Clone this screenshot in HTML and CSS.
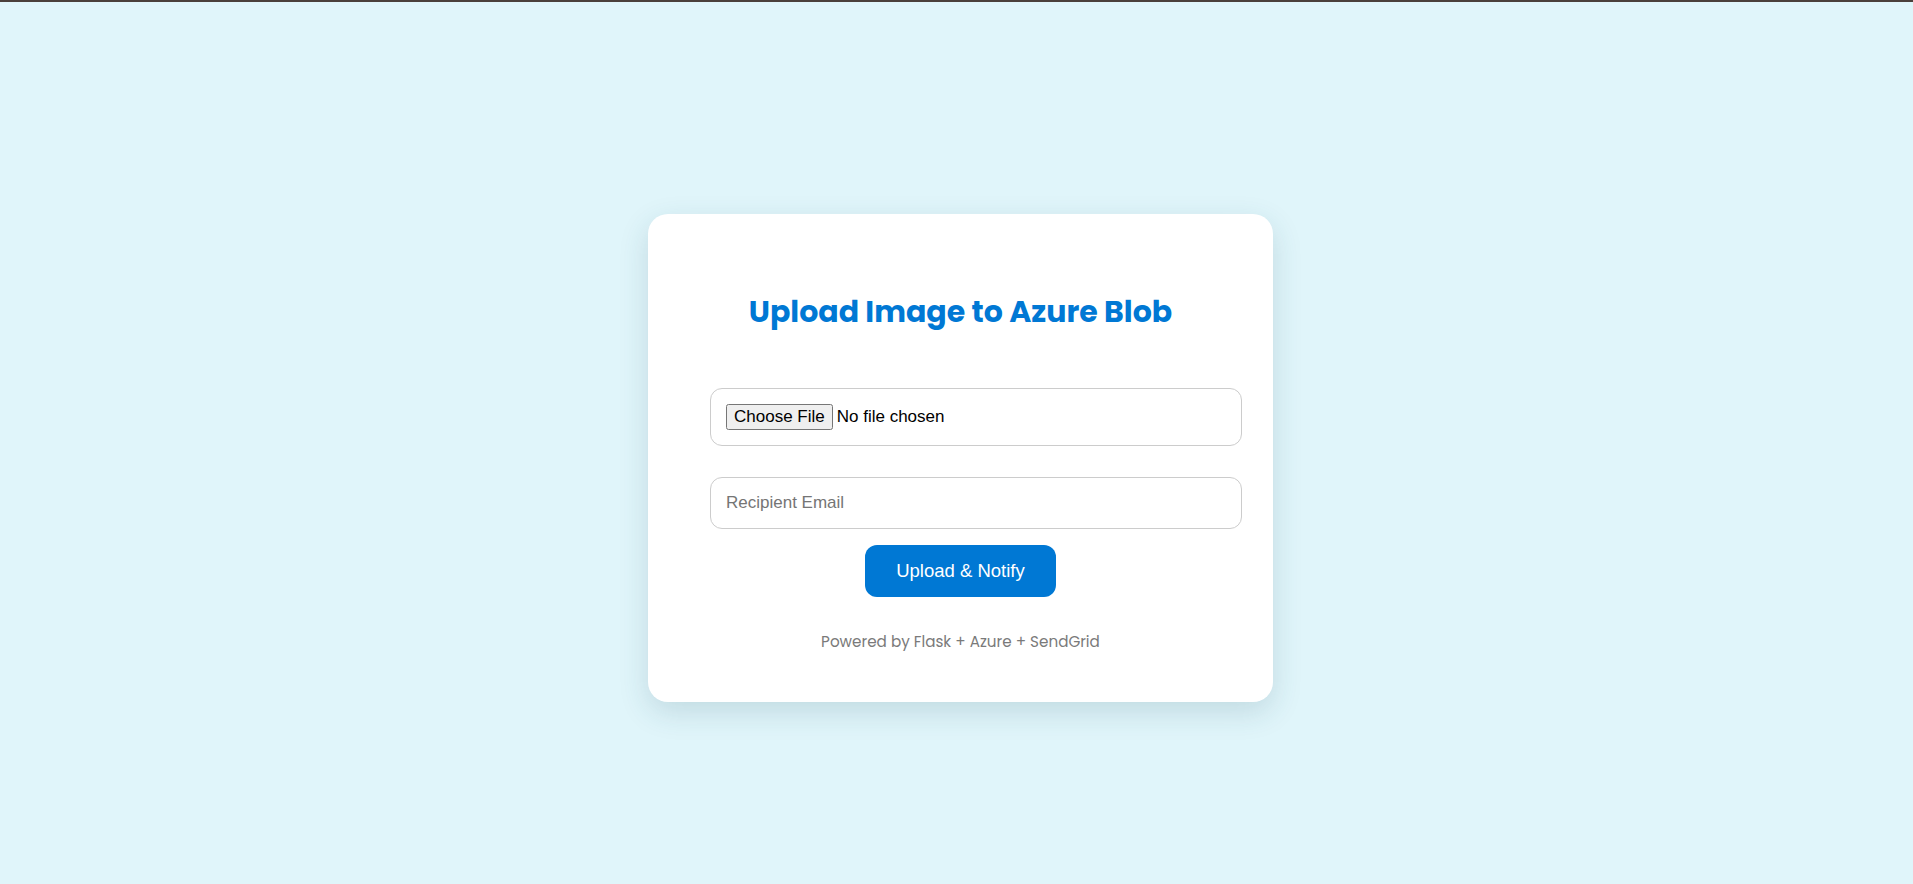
FILE: index.html
```html
<!DOCTYPE html>
<html lang="en">
<head>
<meta charset="utf-8">
<title>Upload Image to Azure Blob</title>
<link rel="stylesheet" href="styles.css">
</head>
<body>
<div class="topbar"></div>
<main class="page">
  <div class="card">
    <h2 class="title">Upload Image to Azure Blob</h2>
    <form class="form" action="#" method="post" enctype="multipart/form-data">
      <input class="field field-file" type="file" name="file">
      <input class="field field-email" type="email" name="email" placeholder="Recipient Email">
      <button class="submit" type="button">Upload &amp; Notify</button>
    </form>
    <p class="footer">Powered by Flask + Azure + SendGrid</p>
  </div>
</main>
</body>
</html>
```

FILE: styles.css
```css
html, body {
  margin: 0;
  padding: 0;
}

body {
  background: #e0f5fa;
  font-family: "Liberation Sans", Arial, sans-serif;
}

.topbar {
  height: 2px;
  background: #4a403b;
}

.page {
  box-sizing: border-box;
  min-height: calc(100vh - 2px);
  padding: 29px 0 0 8px;
  display: flex;
  align-items: center;
  justify-content: center;
}

.card {
  box-sizing: border-box;
  width: 625px;
  background: #ffffff;
  border-radius: 20px;
  box-shadow: 0 10px 30px rgba(30, 80, 100, 0.16);
  padding: 40px 31px 50px;
  display: flex;
  flex-direction: column;
  align-items: center;
}

.title {
  margin: 41px 0 0;
  font-family: "Poppins", "Inter", sans-serif;
  font-weight: 700;
  font-size: 30px;
  line-height: 34px;
  color: #0078d4;
  text-align: center;
}

.form {
  display: flex;
  flex-direction: column;
  align-items: center;
  align-self: stretch;
  margin-top: 59px;
}

.field {
  box-sizing: border-box;
  display: block;
  width: 532px;
  margin: 0 0 0 31px;
  padding: 15px;
  border: 1px solid #cccccc;
  border-radius: 12px;
  font-family: "Liberation Sans", Arial, sans-serif;
  font-size: 17px;
  color: #000000;
  background: #ffffff;
}

.field-email {
  margin-top: 31px;
}

.field-email::placeholder {
  color: #757575;
}

.submit {
  margin-top: 16px;
  padding: 15px 31px;
  border: none;
  border-radius: 12px;
  background: #0078d4;
  color: #ffffff;
  font-family: "Liberation Sans", Arial, sans-serif;
  font-size: 18.5px;
  cursor: pointer;
}

.footer {
  margin: 35px 0 0;
  font-family: "Poppins", "Inter", sans-serif;
  font-size: 15.2px;
  line-height: 20px;
  color: #7a7a7a;
  text-align: center;
}
```
